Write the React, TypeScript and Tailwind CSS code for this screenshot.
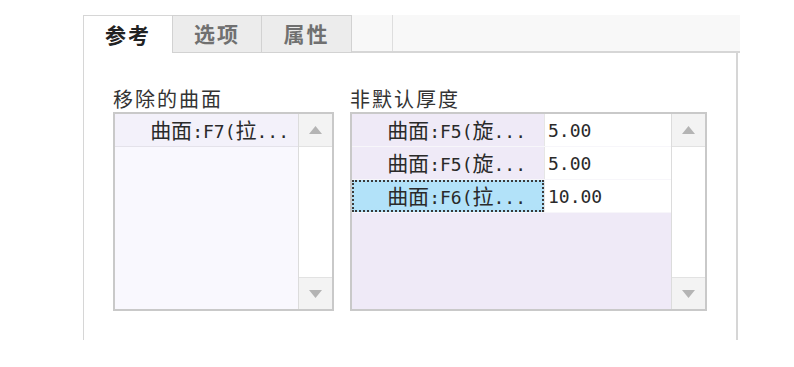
// Property-panel: tabs + two list boxes (removed faces / non-default thickness)

const CJK = /([\u3400-\u9fff]+)/;

// SimSun-ish look: full-width CJK ~21px, half-width Latin ~11px
function Mixed({ text }: { text: string }) {
  const parts = text.split(CJK).filter(Boolean);
  return (
    <span className="whitespace-pre">
      {parts.map((p, i) =>
        CJK.test(p) ? (
          <span key={i} className="font-['Noto_Sans_CJK_SC',sans-serif] text-[21px]">
            {p}
          </span>
        ) : (
          <span key={i} className="font-['DejaVu_Sans_Mono','Liberation_Mono',monospace] text-[18px]">
            {p}
          </span>
        ),
      )}
    </span>
  );
}

function Arrow({ down }: { down?: boolean }) {
  return (
    <svg width="13" height="8" viewBox="0 0 13 8">
      <path d={down ? "M0 0 H13 L6.5 8 Z" : "M0 8 H13 L6.5 0 Z"} fill="#b4b4b4" />
    </svg>
  );
}

function ScrollBar() {
  return (
    <div className="w-[34px] flex flex-col bg-white border-l border-[#dcdcdc]">
      <div className="h-[33px] flex items-center justify-center bg-[#f3f3f3] border-b border-[#e2e2e2]">
        <Arrow />
      </div>
      <div className="flex-1" />
      <div className="h-[32px] flex items-center justify-center bg-[#f3f3f3] border-t border-[#e2e2e2]">
        <Arrow down />
      </div>
    </div>
  );
}

function Label({ children }: { children: string }) {
  return (
    <div className="h-[22px] leading-[22px] text-[#333] font-['Noto_Sans_CJK_SC',sans-serif] text-[20px] tracking-[2px]">
      {children}
    </div>
  );
}

const THICK = [
  { face: "曲面:F5(旋...", value: "5.00" },
  { face: "曲面:F5(旋...", value: "5.00" },
  { face: "曲面:F6(拉...", value: "10.00", selected: true },
];

export default function App() {
  return (
    <div className="w-[794px] h-[367px] bg-white text-[#2a2a2a] overflow-hidden">
      <div className="ml-[83px] pt-[15px] w-[657px]">
        {/* Tabs */}
        <div className="flex h-[38px]">
          <div className="w-[89px] flex items-center justify-center bg-white border-t border-l border-[#d6d6d6] font-['Noto_Sans_CJK_SC',sans-serif] font-bold text-[21px] tracking-[2px] text-[#222]">
            参考
          </div>
          <div className="w-[90px] flex items-center justify-center bg-[#ececec] border border-[#d2d2d2] font-['Noto_Sans_CJK_SC',sans-serif] font-bold text-[21px] tracking-[2px] text-[#707070]">
            选项
          </div>
          <div className="w-[90px] flex items-center justify-center bg-[#ececec] border border-l-0 border-[#d2d2d2] font-['Noto_Sans_CJK_SC',sans-serif] font-bold text-[21px] tracking-[2px] text-[#707070]">
            属性
          </div>
          <div className="flex-1 flex bg-[#f8f8f8] border-b-2 border-[#d6d6d6]">
            <div className="w-[41px] border-r border-[#dedede]" />
          </div>
        </div>

        {/* Panel */}
        <div className="w-[655px] h-[287px] border-l border-r-2 border-[#d6d6d6] flex pl-[29px] pt-[35px]">
          {/* Removed faces */}
          <div className="w-[221px] flex flex-col">
            <Label>移除的曲面</Label>
            <div className="mt-[2px] h-[199px] border-2 border-[#c9c9c9] flex bg-[#f9f8fe]">
              <div className="flex-1 flex flex-col">
                <div className="h-[33px] flex items-center justify-end pr-[9px] bg-[#f3f1fa] border-b border-[#e4e2ea]">
                  <Mixed text="曲面:F7(拉..." />
                </div>
              </div>
              <ScrollBar />
            </div>
          </div>

          {/* Non-default thickness */}
          <div className="ml-[16px] w-[357px] flex flex-col">
            <Label>非默认厚度</Label>
            <div className="mt-[2px] h-[199px] border-2 border-[#c9c9c9] flex bg-[#efeaf7]">
              <div className="flex-1 flex flex-col">
                {THICK.map((r, i) => (
                  <div key={i} className="h-[33px] flex border-b border-[#f7f6fa]">
                    <div
                      className={
                        r.selected
                          ? "w-[192px] flex items-center justify-end pr-[16px] bg-[#b2e2f9] border-2 border-dotted border-[#3a3a3a]"
                          : "w-[192px] flex items-center justify-end pr-[18px] bg-[#efeaf7]"
                      }
                    >
                      <Mixed text={r.face} />
                    </div>
                    <div className="flex-1 flex items-center pl-[3px] bg-white border-l border-[#e6e6e6]">
                      <Mixed text={r.value} />
                    </div>
                  </div>
                ))}
              </div>
              <ScrollBar />
            </div>
          </div>
        </div>
      </div>
    </div>
  );
}
